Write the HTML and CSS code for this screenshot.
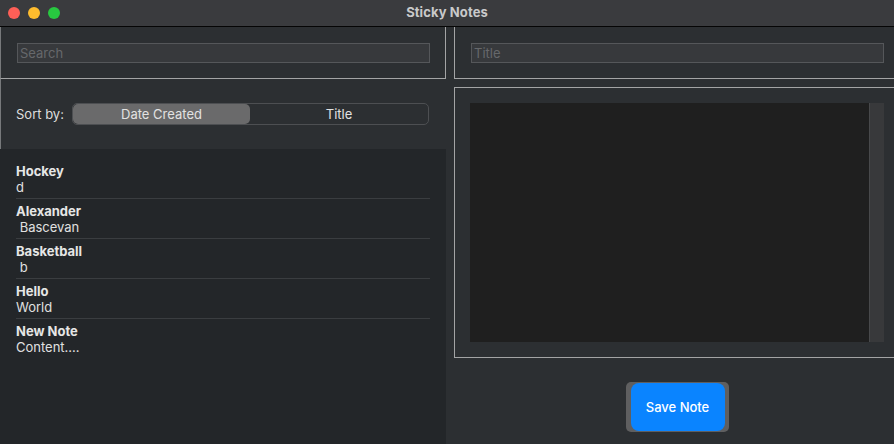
FILE: index.html
```html
<!DOCTYPE html>
<html lang="en">
<head>
<meta charset="utf-8">
<title>Sticky Notes</title>
<link rel="stylesheet" href="styles.css">
</head>
<body>
<div class="window">
  <header class="titlebar">
    <div class="lights">
      <span class="light red"></span>
      <span class="light yellow"></span>
      <span class="light green"></span>
    </div>
    <div class="wintitle">Sticky Notes</div>
  </header>
  <main class="content">
    <section class="left">
      <div class="box search-box">
        <div class="field"><span class="placeholder">Search</span></div>
      </div>
      <div class="sortbar">
        <span class="sort-label">Sort by:</span>
        <div class="segmented">
          <div class="seg selected">Date Created</div>
          <div class="seg">Title</div>
        </div>
      </div>
      <ul class="notes">
        <li class="note"><div class="note-title">Hockey</div><div class="note-body">d</div></li>
        <li class="note"><div class="note-title">Alexander</div><div class="note-body"> Bascevan</div></li>
        <li class="note"><div class="note-title">Basketball</div><div class="note-body"> b</div></li>
        <li class="note"><div class="note-title">Hello</div><div class="note-body">World</div></li>
        <li class="note"><div class="note-title">New Note</div><div class="note-body">Content....</div></li>
      </ul>
    </section>
    <section class="right">
      <div class="box title-box">
        <div class="field"><span class="placeholder">Title</span></div>
      </div>
      <div class="box editor-box">
        <div class="editor">
          <div class="textarea"></div>
          <div class="scrollbar"></div>
        </div>
      </div>
      <div class="actions">
        <div class="btn-frame"><button class="save">Save Note</button></div>
      </div>
    </section>
  </main>
</div>
</body>
</html>
```
FILE: styles.css
```css
* { box-sizing: border-box; }
html, body { margin: 0; padding: 0; }
body {
  width: 894px;
  height: 444px;
  overflow: hidden;
  background: #2c2f32;
  font-family: Inter, "Helvetica Neue", "Liberation Sans", sans-serif;
  font-size: 13px;
  color: #e4e4e4;
}
.window {
  width: 894px;
  height: 444px;
  display: flex;
  flex-direction: column;
  overflow: hidden;
  background: #2c2f32;
}
.titlebar {
  height: 27px;
  flex: none;
  background: #3a3b3e;
  border-bottom: 1px solid #050505;
  display: flex;
  align-items: center;
  position: relative;
}
.lights {
  display: flex;
  gap: 8px;
  padding-left: 8px;
}
.light {
  width: 12px;
  height: 12px;
  border-radius: 50%;
  display: block;
}
.red { background: #fe5f57; }
.yellow { background: #febc2e; }
.green { background: #28c840; }
.wintitle {
  position: absolute;
  left: 0;
  right: 0;
  top: 4px;
  text-align: center;
  font-weight: 700;
  font-size: 13px;
  color: #c9c9ca;
  letter-spacing: 0.1px;
}
.content {
  flex: 1;
  display: grid;
  grid-template-columns: 445px 446px;
  column-gap: 8px;
  min-height: 0;
  border-left: 1px solid #77797b;
}
.left {
  display: flex;
  flex-direction: column;
  min-height: 0;
  margin-left: -1px;
}
.box {
  border: 1px solid #a3a4a5;
  border-top: none;
}
.search-box {
  height: 52px;
  padding: 16px 15px 0 16px;
  border-left-color: #77797b;
}
.title-box {
  height: 52px;
  padding: 16px 0 0 16px;
}
.field {
  width: 413px;
  height: 20px;
  background: #37393c;
  border: 1px solid #55575a;
  padding-left: 2px;
  line-height: 18px;
}
.placeholder {
  color: #66686b;
  font-size: 13px;
}
.sortbar {
  height: 70px;
  flex: none;
  display: flex;
  align-items: center;
  padding: 0 16px;
  gap: 8px;
}
.sort-label {
  color: #dedede;
  width: 48px;
}
.segmented {
  width: 357px;
  height: 22px;
  border: 1px solid #4d4f52;
  border-radius: 5px;
  display: grid;
  grid-template-columns: 177px 1fr;
}
.seg {
  display: flex;
  align-items: center;
  justify-content: center;
  color: #e2e2e2;
  line-height: 20px;
}
.seg.selected {
  background: #6a6a6b;
  border-radius: 5px;
}
.notes {
  list-style: none;
  margin: 0;
  padding: 10px 16px 0 16px;
  background: #232629;
  flex: 1;
  width: 446px;
}
.note {
  padding: 4px 0 3px;
  border-bottom: 1px solid #3a3d40;
  line-height: 16px;
}
.note:last-child { border-bottom: none; }
.note-title {
  font-weight: 700;
  color: #e6e6e6;
}
.note-body {
  white-space: pre;
  color: #e0e0e0;
}
.right {
  display: flex;
  flex-direction: column;
  min-height: 0;
}
.editor-box {
  margin-top: 8px;
  border-top: 1px solid #a3a4a5;
  height: 271px;
  padding: 15px 0 15px 15px;
}
.editor {
  display: flex;
  width: 414px;
  height: 239px;
}
.textarea {
  flex: 1;
  background: #1f1f1f;
}
.scrollbar {
  width: 15px;
  background: #38393b;
  border-left: 1px solid #48494b;
}
.actions {
  display: flex;
  justify-content: center;
  padding-top: 24px;
}
.btn-frame {
  background: #5f5f60;
  border-radius: 5px;
  padding: 1px 4px 1px 5px;
}
.save {
  display: block;
  width: 94px;
  height: 48px;
  border: none;
  border-radius: 8px;
  background: #0a84ff;
  color: #ffffff;
  font-family: Inter, "Helvetica Neue", "Liberation Sans", sans-serif;
  font-size: 13px;
  font-weight: 500;
  padding: 0;
}
```
